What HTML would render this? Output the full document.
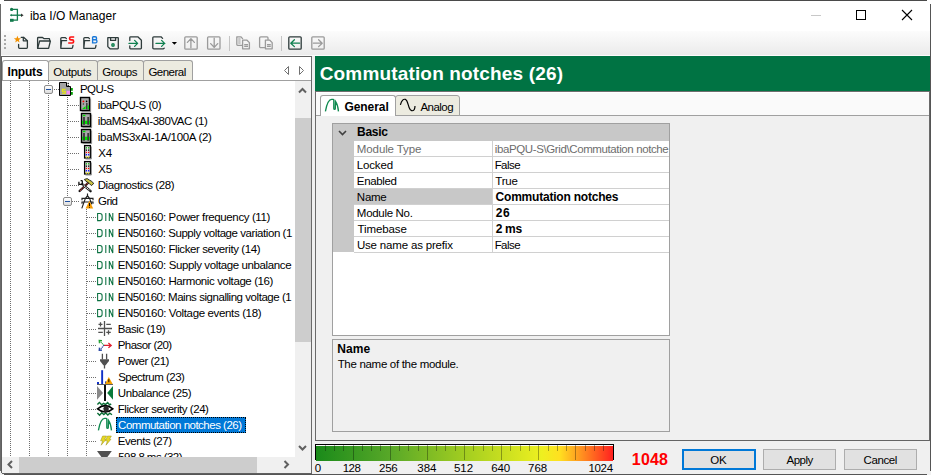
<!DOCTYPE html>
<html><head><meta charset="utf-8">
<style>
*{margin:0;padding:0;box-sizing:border-box}
html,body{width:931px;height:475px;overflow:hidden;background:#f0f0f0}
body{position:relative;font-family:"Liberation Sans",sans-serif;font-size:11px;color:#000}
.a{position:absolute}
.t{position:absolute;white-space:pre}
svg{position:absolute;overflow:visible}
</style></head><body>
<div class="a" style="left:0;top:0;width:931px;height:31px;background:#fff"></div>
<div class="a" style="left:1px;top:31px;width:929px;height:25px;background:linear-gradient(#fcfcfc,#ebebeb 96%,#fbfbfb 96%)"></div>
<div class="t" style="left:29.91px;top:10.44px;font-size:12px;line-height:12px;letter-spacing:0.013px">iba I/O Manager</div>
<div class="a" style="left:1px;top:56px;width:311px;height:417px;background:#fff;border-top:1px solid #646464;border-right:1px solid #6a6a6a"></div>
<div class="a" style="left:2px;top:60px;width:47px;height:21px;background:#fff;border:1px solid #a0a0a0;border-bottom:none;border-radius:3px 3px 0 0"></div>
<div class="a" style="left:48px;top:60px;width:50px;height:21px;background:#ecebe0;border:1px solid #a0a0a0;border-bottom:none;border-radius:3px 3px 0 0"></div>
<div class="a" style="left:97px;top:60px;width:47px;height:21px;background:#ecebe0;border:1px solid #a0a0a0;border-bottom:none;border-radius:3px 3px 0 0"></div>
<div class="a" style="left:143px;top:60px;width:50px;height:21px;background:#ecebe0;border:1px solid #a0a0a0;border-bottom:none;border-radius:3px 3px 0 0"></div>
<div class="t" style="left:7.51px;top:66.14px;font-size:12.0px;line-height:12.0px;letter-spacing:-0.176px;font-weight:bold">Inputs</div>
<div class="t" style="left:53.26px;top:67.07px;font-size:11.5px;line-height:11.5px;letter-spacing:-0.352px">Outputs</div>
<div class="t" style="left:102.22px;top:67.07px;font-size:11.5px;line-height:11.5px;letter-spacing:-0.501px">Groups</div>
<div class="t" style="left:148.43px;top:67.07px;font-size:11.5px;line-height:11.5px;letter-spacing:-0.515px">General</div>
<div class="a" style="left:1px;top:80px;width:310px;height:1px;background:#a0a0a0"></div>
<svg style="left:0;top:0" width="931" height="475"><path d="M288.5 66.5 L284.5 70.5 L288.5 74.5 Z M299.5 66.5 L303.5 70.5 L299.5 74.5 Z" fill="none" stroke="#707070" stroke-width="1"/></svg>
<div class="a" style="left:10px;top:81px;width:1px;height:376px;background:repeating-linear-gradient(#6e6e6e 0 1px,transparent 1px 2px)"></div>
<div class="a" style="left:29px;top:81px;width:1px;height:376px;background:repeating-linear-gradient(#6e6e6e 0 1px,transparent 1px 2px)"></div>
<div class="a" style="left:48px;top:81px;width:1px;height:4px;background:repeating-linear-gradient(#6e6e6e 0 1px,transparent 1px 2px)"></div>
<div class="a" style="left:48px;top:95px;width:1px;height:362px;background:repeating-linear-gradient(#6e6e6e 0 1px,transparent 1px 2px)"></div>
<div class="a" style="left:67px;top:97px;width:1px;height:360px;background:repeating-linear-gradient(#6e6e6e 0 1px,transparent 1px 2px)"></div>
<div class="a" style="left:86px;top:209px;width:1px;height:248px;background:repeating-linear-gradient(#6e6e6e 0 1px,transparent 1px 2px)"></div>
<div class="a" style="left:0;top:81px;width:294px;height:376px;overflow:hidden"><div class="a" style="left:0;top:-81px;width:931px;height:475px">
<div class="a" style="left:54px;top:89px;width:5px;height:1px;background:repeating-linear-gradient(90deg,#6e6e6e 0 1px,transparent 1px 2px)"></div>
<div class="t" style="left:80.06px;top:83.97px;font-size:11.5px;line-height:11.5px;letter-spacing:-0.603px">PQU-S</div>
<div class="a" style="left:68px;top:105px;width:11px;height:1px;background:repeating-linear-gradient(90deg,#6e6e6e 0 1px,transparent 1px 2px)"></div>
<div class="t" style="left:97.84px;top:99.97px;font-size:11.5px;line-height:11.5px;letter-spacing:-0.476px">ibaPQU-S (0)</div>
<div class="a" style="left:68px;top:121px;width:11px;height:1px;background:repeating-linear-gradient(90deg,#6e6e6e 0 1px,transparent 1px 2px)"></div>
<div class="t" style="left:97.84px;top:115.97px;font-size:11.5px;line-height:11.5px;letter-spacing:-0.458px">ibaMS4xAI-380VAC (1)</div>
<div class="a" style="left:68px;top:137px;width:11px;height:1px;background:repeating-linear-gradient(90deg,#6e6e6e 0 1px,transparent 1px 2px)"></div>
<div class="t" style="left:97.84px;top:131.97px;font-size:11.5px;line-height:11.5px;letter-spacing:-0.303px">ibaMS3xAI-1A/100A (2)</div>
<div class="a" style="left:68px;top:153px;width:11px;height:1px;background:repeating-linear-gradient(90deg,#6e6e6e 0 1px,transparent 1px 2px)"></div>
<div class="t" style="left:98.35px;top:147.97px;font-size:11.5px;line-height:11.5px;letter-spacing:-0.281px">X4</div>
<div class="a" style="left:68px;top:169px;width:11px;height:1px;background:repeating-linear-gradient(90deg,#6e6e6e 0 1px,transparent 1px 2px)"></div>
<div class="t" style="left:98.35px;top:163.97px;font-size:11.5px;line-height:11.5px;letter-spacing:-0.281px">X5</div>
<div class="a" style="left:68px;top:185px;width:11px;height:1px;background:repeating-linear-gradient(90deg,#6e6e6e 0 1px,transparent 1px 2px)"></div>
<div class="t" style="left:97.66px;top:179.97px;font-size:11.5px;line-height:11.5px;letter-spacing:-0.418px">Diagnostics (28)</div>
<div class="a" style="left:68px;top:201px;width:11px;height:1px;background:repeating-linear-gradient(90deg,#6e6e6e 0 1px,transparent 1px 2px)"></div>
<div class="t" style="left:98.02px;top:195.97px;font-size:11.5px;line-height:11.5px;letter-spacing:-0.580px">Grid</div>
<div class="a" style="left:87px;top:217px;width:10px;height:1px;background:repeating-linear-gradient(90deg,#6e6e6e 0 1px,transparent 1px 2px)"></div>
<div class="t" style="left:117.76px;top:211.97px;font-size:11.5px;line-height:11.5px;letter-spacing:-0.387px">EN50160: Power frequency (11)</div>
<div class="a" style="left:87px;top:233px;width:10px;height:1px;background:repeating-linear-gradient(90deg,#6e6e6e 0 1px,transparent 1px 2px)"></div>
<div class="t" style="left:117.76px;top:227.97px;font-size:11.5px;line-height:11.5px;letter-spacing:-0.435px">EN50160: Supply voltage variation (1</div>
<div class="a" style="left:87px;top:249px;width:10px;height:1px;background:repeating-linear-gradient(90deg,#6e6e6e 0 1px,transparent 1px 2px)"></div>
<div class="t" style="left:117.76px;top:243.97px;font-size:11.5px;line-height:11.5px;letter-spacing:-0.409px">EN50160: Flicker severity (14)</div>
<div class="a" style="left:87px;top:265px;width:10px;height:1px;background:repeating-linear-gradient(90deg,#6e6e6e 0 1px,transparent 1px 2px)"></div>
<div class="t" style="left:117.76px;top:259.97px;font-size:11.5px;line-height:11.5px;letter-spacing:-0.383px">EN50160: Supply voltage unbalance</div>
<div class="a" style="left:87px;top:281px;width:10px;height:1px;background:repeating-linear-gradient(90deg,#6e6e6e 0 1px,transparent 1px 2px)"></div>
<div class="t" style="left:117.76px;top:275.97px;font-size:11.5px;line-height:11.5px;letter-spacing:-0.409px">EN50160: Harmonic voltage (16)</div>
<div class="a" style="left:87px;top:297px;width:10px;height:1px;background:repeating-linear-gradient(90deg,#6e6e6e 0 1px,transparent 1px 2px)"></div>
<div class="t" style="left:117.76px;top:291.97px;font-size:11.5px;line-height:11.5px;letter-spacing:-0.454px">EN50160: Mains signalling voltage (1</div>
<div class="a" style="left:87px;top:313px;width:10px;height:1px;background:repeating-linear-gradient(90deg,#6e6e6e 0 1px,transparent 1px 2px)"></div>
<div class="t" style="left:117.76px;top:307.97px;font-size:11.5px;line-height:11.5px;letter-spacing:-0.358px">EN50160: Voltage events (18)</div>
<div class="a" style="left:87px;top:329px;width:10px;height:1px;background:repeating-linear-gradient(90deg,#6e6e6e 0 1px,transparent 1px 2px)"></div>
<div class="t" style="left:117.76px;top:323.97px;font-size:11.5px;line-height:11.5px;letter-spacing:-0.436px">Basic (19)</div>
<div class="a" style="left:87px;top:345px;width:10px;height:1px;background:repeating-linear-gradient(90deg,#6e6e6e 0 1px,transparent 1px 2px)"></div>
<div class="t" style="left:117.76px;top:339.97px;font-size:11.5px;line-height:11.5px;letter-spacing:-0.571px">Phasor (20)</div>
<div class="a" style="left:87px;top:361px;width:10px;height:1px;background:repeating-linear-gradient(90deg,#6e6e6e 0 1px,transparent 1px 2px)"></div>
<div class="t" style="left:117.76px;top:355.97px;font-size:11.5px;line-height:11.5px;letter-spacing:-0.514px">Power (21)</div>
<div class="a" style="left:87px;top:377px;width:10px;height:1px;background:repeating-linear-gradient(90deg,#6e6e6e 0 1px,transparent 1px 2px)"></div>
<div class="t" style="left:118.18px;top:371.97px;font-size:11.5px;line-height:11.5px;letter-spacing:-0.512px">Spectrum (23)</div>
<div class="a" style="left:87px;top:393px;width:10px;height:1px;background:repeating-linear-gradient(90deg,#6e6e6e 0 1px,transparent 1px 2px)"></div>
<div class="t" style="left:117.81px;top:387.97px;font-size:11.5px;line-height:11.5px;letter-spacing:-0.366px">Unbalance (25)</div>
<div class="a" style="left:87px;top:409px;width:10px;height:1px;background:repeating-linear-gradient(90deg,#6e6e6e 0 1px,transparent 1px 2px)"></div>
<div class="t" style="left:117.76px;top:403.97px;font-size:11.5px;line-height:11.5px;letter-spacing:-0.458px">Flicker severity (24)</div>
<div class="a" style="left:87px;top:425px;width:10px;height:1px;background:repeating-linear-gradient(90deg,#6e6e6e 0 1px,transparent 1px 2px)"></div>
<div class="a" style="left:116px;top:417px;width:130px;height:16px;background:#0078d7;outline:1px dotted #000;outline-offset:-1px"></div>
<div class="t" style="left:118.12px;top:419.97px;font-size:11.5px;line-height:11.5px;letter-spacing:-0.504px;color:#fff">Commutation notches (26)</div>
<div class="a" style="left:87px;top:441px;width:10px;height:1px;background:repeating-linear-gradient(90deg,#6e6e6e 0 1px,transparent 1px 2px)"></div>
<div class="t" style="left:117.76px;top:435.97px;font-size:11.5px;line-height:11.5px;letter-spacing:-0.445px">Events (27)</div>
<div class="a" style="left:87px;top:457px;width:10px;height:1px;background:repeating-linear-gradient(90deg,#6e6e6e 0 1px,transparent 1px 2px)"></div>
<div class="t" style="left:118.24px;top:451.97px;font-size:11.5px;line-height:11.5px;letter-spacing:-0.557px">598.8 ms (32)</div>
<svg style="left:0;top:0" width="931" height="475"><path d="M59.5 82.5 H66.5 V86.5 H70.5 V95.5 H59.5 Z" fill="#a4a4a4" stroke="#000" stroke-width="1"/><rect x="67.6" y="82.8" width="1.2" height="1.2" fill="#000"/><rect x="67.6" y="84.8" width="1.2" height="1.2" fill="#000"/><path d="M65.6 89.3 H62.4 V91.2 H65.2 V93.3 H62" fill="none" stroke="#f0f000" stroke-width="1.1"/><rect x="66.6" y="90.8" width="3.4" height="3.4" fill="#f48cf4"/><rect x="71" y="88" width="1.8" height="2.8" fill="#00a000"/><rect x="71" y="92" width="1.8" height="2.8" fill="#00a000"/><rect x="80.5" y="97.5" width="9" height="13" fill="#a8a8a8" stroke="#000" stroke-width="1.4"/><path d="M90.6 98.5 V111.6 H81.5" stroke="#808080" stroke-width="1" fill="none"/><circle cx="83.4" cy="101.4" r="0.9" fill="#ff0000"/><circle cx="86.6" cy="101.4" r="0.8" fill="#000"/><circle cx="83.4" cy="104" r="0.7" fill="#333"/><rect x="86" y="103" width="1.6" height="6.5" fill="#404040"/><path d="M82 109 L85.6 106 V109 Z" fill="#00e000"/><rect x="87.6" y="105.5" width="1.4" height="3.5" fill="#00e000"/><rect x="81.5" y="113.5" width="9" height="13" fill="#a8a8a8" stroke="#000" stroke-width="1.4"/><path d="M91.6 114.5 V127.6 H82.5" stroke="#808080" stroke-width="1" fill="none"/><rect x="82.8" y="114.8" width="2.6" height="1.4" fill="#00e000"/><rect x="82" y="120.7" width="8" height="3.4" fill="#00e000"/><rect x="83.1" y="117" width="1.8" height="7.8" fill="#3a3a3a"/><rect x="87.3" y="117" width="1.8" height="7.8" fill="#3a3a3a"/><rect x="81.5" y="129.5" width="9" height="13" fill="#a8a8a8" stroke="#000" stroke-width="1.4"/><path d="M91.6 130.5 V143.6 H82.5" stroke="#808080" stroke-width="1" fill="none"/><rect x="82.8" y="130.8" width="2.6" height="1.4" fill="#00e000"/><rect x="82" y="136.7" width="8" height="3.4" fill="#00e000"/><rect x="83.1" y="133" width="1.8" height="7.8" fill="#3a3a3a"/><rect x="87.3" y="133" width="1.8" height="7.8" fill="#3a3a3a"/><rect x="84.6" y="145.6" width="5.8" height="12.4" fill="#e0e0e0" stroke="#000" stroke-width="1.3"/><path d="M91.4 146.5 V159 H85.5" stroke="#909090" stroke-width="1" fill="none"/><rect x="85.8" y="147.2" width="1.2" height="1.3" fill="#00b000"/><rect x="88" y="147.2" width="1.2" height="1.3" fill="#00b000"/><rect x="85.8" y="149.5" width="1.2" height="1.3" fill="#000"/><rect x="88" y="149.5" width="1.2" height="1.3" fill="#000"/><rect x="85.8" y="151.79999999999998" width="1.2" height="1.3" fill="#ff0000"/><rect x="88" y="151.79999999999998" width="1.2" height="1.3" fill="#ff0000"/><rect x="85.8" y="154.1" width="1.2" height="1.3" fill="#0000ff"/><rect x="88" y="154.1" width="1.2" height="1.3" fill="#0000ff"/><rect x="85.8" y="156.39999999999998" width="1.2" height="1.3" fill="#f0f000"/><rect x="88" y="156.39999999999998" width="1.2" height="1.3" fill="#f0f000"/><rect x="84.6" y="161.6" width="5.8" height="12.4" fill="#e0e0e0" stroke="#000" stroke-width="1.3"/><path d="M91.4 162.5 V175 H85.5" stroke="#909090" stroke-width="1" fill="none"/><rect x="85.8" y="163.2" width="1.2" height="1.3" fill="#00b000"/><rect x="88" y="163.2" width="1.2" height="1.3" fill="#00b000"/><rect x="85.8" y="165.5" width="1.2" height="1.3" fill="#000"/><rect x="88" y="165.5" width="1.2" height="1.3" fill="#000"/><rect x="85.8" y="167.79999999999998" width="1.2" height="1.3" fill="#ff0000"/><rect x="88" y="167.79999999999998" width="1.2" height="1.3" fill="#ff0000"/><rect x="85.8" y="170.1" width="1.2" height="1.3" fill="#0000ff"/><rect x="88" y="170.1" width="1.2" height="1.3" fill="#0000ff"/><rect x="85.8" y="172.39999999999998" width="1.2" height="1.3" fill="#f0f000"/><rect x="88" y="172.39999999999998" width="1.2" height="1.3" fill="#f0f000"/><path d="M88 183 L79.6 191" stroke="#111" stroke-width="2.3" stroke-linecap="round"/><path d="M87.6 183.4 L80 190.6" stroke="#e04848" stroke-width="1.2" stroke-dasharray="1.1 0.8"/><path d="M82.2 184.2 L90.6 191.2" stroke="#111" stroke-width="2.3" stroke-linecap="round"/><path d="M82.6 184.6 L90.2 190.8" stroke="#fff" stroke-width="1.2" stroke-dasharray="1.1 0.8"/><path d="M78.9 181.8 V184.3 H82.3 V180.6 M80.6 180.6 H82.3" fill="none" stroke="#111" stroke-width="1.3"/><path d="M84.4 179.4 L87.2 178.6 L89.6 180.2 L91.2 181 L93.8 183.4 L91.4 185.6 L89.6 183.8 L87.6 182.2 L85.8 181.2 Z" fill="#c8c040" stroke="#1a1a1a" stroke-width="0.9" stroke-linejoin="round"/><g stroke="#202020" stroke-width="1.15" fill="none" stroke-linejoin="miter"><path d="M87.5 193.4 V196.2 M85.4 198.4 L87.5 195.6 L89.6 198.4 M82 200.2 V198.4 H93 V200.2 M82 203.8 V202 H93 V203.8 M85.4 198.4 L81.8 208.4 M89.6 198.4 L91.8 204.4"/></g><path d="M89.4 200.8 L93.2 208.4 H85.6 Z" fill="#f59a00"/><rect x="89" y="203" width="0.9" height="3" fill="#000"/><rect x="89" y="206.8" width="0.9" height="0.9" fill="#000"/><g stroke="#0a7040" stroke-width="1.05" fill="none" stroke-linejoin="miter"><path d="M97.6 213.5 H100 Q102.1 213.5 102.1 215.8 V218.3 Q102.1 220.6 100 220.6 H97.6 Z"/><path d="M105.8 213 V221.1"/><path d="M109.3 221.1 V213.1 L112.8 221 V213"/></g><g stroke="#0a7040" stroke-width="1.05" fill="none" stroke-linejoin="miter"><path d="M97.6 229.5 H100 Q102.1 229.5 102.1 231.8 V234.3 Q102.1 236.6 100 236.6 H97.6 Z"/><path d="M105.8 229 V237.1"/><path d="M109.3 237.1 V229.1 L112.8 237 V229"/></g><g stroke="#0a7040" stroke-width="1.05" fill="none" stroke-linejoin="miter"><path d="M97.6 245.5 H100 Q102.1 245.5 102.1 247.8 V250.3 Q102.1 252.6 100 252.6 H97.6 Z"/><path d="M105.8 245 V253.1"/><path d="M109.3 253.1 V245.1 L112.8 253 V245"/></g><g stroke="#0a7040" stroke-width="1.05" fill="none" stroke-linejoin="miter"><path d="M97.6 261.5 H100 Q102.1 261.5 102.1 263.8 V266.3 Q102.1 268.6 100 268.6 H97.6 Z"/><path d="M105.8 261 V269.1"/><path d="M109.3 269.1 V261.1 L112.8 269 V261"/></g><g stroke="#0a7040" stroke-width="1.05" fill="none" stroke-linejoin="miter"><path d="M97.6 277.5 H100 Q102.1 277.5 102.1 279.8 V282.3 Q102.1 284.6 100 284.6 H97.6 Z"/><path d="M105.8 277 V285.1"/><path d="M109.3 285.1 V277.1 L112.8 285 V277"/></g><g stroke="#0a7040" stroke-width="1.05" fill="none" stroke-linejoin="miter"><path d="M97.6 293.5 H100 Q102.1 293.5 102.1 295.8 V298.3 Q102.1 300.6 100 300.6 H97.6 Z"/><path d="M105.8 293 V301.1"/><path d="M109.3 301.1 V293.1 L112.8 301 V293"/></g><g stroke="#0a7040" stroke-width="1.05" fill="none" stroke-linejoin="miter"><path d="M97.6 309.5 H100 Q102.1 309.5 102.1 311.8 V314.3 Q102.1 316.6 100 316.6 H97.6 Z"/><path d="M105.8 309 V317.1"/><path d="M109.3 317.1 V309.1 L112.8 317 V309"/></g><g stroke="#505050" stroke-width="1.3"><path d="M104.5 321 V336 M98 328.5 H112 M98.5 324.4 H102.5 M100.5 322.3 V326.5 M106.3 324.4 H110.8 M98.3 332.3 H102.8 M106.3 332.3 H110.8 M108.5 330.2 V334.4"/></g><path d="M104 345.4 H111 M108.4 343 L111.2 345.4 L108.4 347.8" stroke="#e02030" stroke-width="1.3" fill="none"/><path d="M104 345.4 L99.6 340.8" stroke="#20a030" stroke-width="1.1" stroke-dasharray="1.1 0.7"/><path d="M99.4 343.2 L99.2 340.4 L102 340.6" stroke="#20a030" stroke-width="1.2" fill="none"/><path d="M104 345.4 L99.6 350" stroke="#2040a0" stroke-width="1.1" stroke-dasharray="1.1 0.7"/><path d="M99.4 347.6 L99.2 350.4 L102 350.2" stroke="#2040a0" stroke-width="1.2" fill="none"/><path d="M102.4 353.8 V359.6 M106.6 353.8 V359.6 M104.5 364 V368.5" stroke="#505050" stroke-width="1.3"/><path d="M100 359.2 H109 V361 L105.6 365.2 H103.4 L100 361 Z" fill="#505050"/><rect x="97" y="382" width="2" height="2.4" fill="#1030c8"/><rect x="101.2" y="370.2" width="1.9" height="14.2" fill="#1030c8"/><rect x="105" y="381.4" width="1.2" height="3" fill="#1030c8"/><path d="M108.8 377 L112.8 384.2 H104.8 Z" fill="#f5a000"/><rect x="108.4" y="379.2" width="0.9" height="3" fill="#000"/><rect x="97" y="384" width="16" height="0.9" fill="#505050"/><path d="M97 386 L103 392.9 L97 399.8 Z" fill="#8a8a8a"/><rect x="104" y="385" width="2" height="16" fill="#111"/><path d="M113 386 L107.2 392.9 L113 399.8 Z" fill="#0a7a3a"/><path d="M97.4 404.4 L99.4 402.4 L101.6 404.8 L103.6 403.4 L105.6 404.6 L107.6 402.6 L109.6 404.8 L111.2 404 " fill="none" stroke="#0a6e36" stroke-width="1.4"/><path d="M97.4 413 L99.6 415.2 L101.8 412.8 L103.8 414.6 L105.8 413 L107.8 415 L109.8 413.2 L112 414.8" fill="none" stroke="#0a6e36" stroke-width="1.4"/><path d="M97.6 408.8 Q105.2 402.4 112.8 408.8 Q105.2 415.2 97.6 408.8 Z" fill="#fff" stroke="#000" stroke-width="1.6"/><circle cx="105.8" cy="408.8" r="3" fill="#2a2a2a"/><path d="M103.4 407 Q102.2 408.8 103.4 410.6" stroke="#fff" stroke-width="1" fill="none"/><path d="M98.4 430.4 C99.6 424 101.8 418.4 104.6 418.4 H106 Q106.8 418.4 106.8 419.2 V427.4 Q106.8 428.3 107.5 428.3 Q108.3 428.3 108.3 427.4 L108.5 420.4 C110 422.6 111.2 427 111.5 430.4" fill="none" stroke="#108a50" stroke-width="1.35"/><path d="M102.6 436 H106.6 L104.6 439.2 H106.2 L101.2 445.2 L102.6 440.8 H100.6 Z" fill="#e8d820" stroke="#9a9020" stroke-width="0.5"/><path d="M107.4 436 H111.4 L109.4 439.2 H111 L106 445.2 L107.4 440.8 H105.4 Z" fill="#e8d820" stroke="#9a9020" stroke-width="0.5"/><path d="M97 451 H111.8 L107.4 457 H101.4 Z" fill="#505050"/></svg>
</div></div>
<div class="a" style="left:44px;top:85px;width:9px;height:9px;border:1px solid #8c8c8c;border-radius:2px;background:linear-gradient(#fff,#dcdcdc)"></div>
<div class="a" style="left:46px;top:89px;width:5px;height:1px;background:#2050a0"></div>
<div class="a" style="left:63px;top:197px;width:9px;height:9px;border:1px solid #8c8c8c;border-radius:2px;background:linear-gradient(#fff,#dcdcdc)"></div>
<div class="a" style="left:65px;top:201px;width:5px;height:1px;background:#2050a0"></div>
<div class="a" style="left:295px;top:81px;width:16px;height:376px;background:#f0f0f0"></div>
<div class="a" style="left:295px;top:118px;width:16px;height:224px;background:#cdcdcd"></div>
<div class="a" style="left:2px;top:457px;width:309px;height:16px;background:#f0f0f0"></div>
<div class="a" style="left:19px;top:457px;width:238px;height:16px;background:#cdcdcd"></div>
<svg style="left:0;top:0" width="931" height="475"><g fill="none" stroke="#606060" stroke-width="2"><path d="M299 92.5 L302.5 89 L306 92.5"/><path d="M299 446 L302.5 449.5 L306 446"/><path d="M12 461 L8.5 464.5 L12 468"/><path d="M284.5 461 L288 464.5 L284.5 468"/></g></svg>
<div class="a" style="left:315px;top:56px;width:615px;height:35px;background:#007343"></div>
<div class="t" style="left:319.72px;top:64.02px;font-size:19px;line-height:19px;letter-spacing:0.159px;font-weight:bold;color:#fff">Commutation notches (26)</div>
<div class="a" style="left:315px;top:91px;width:615px;height:350px;background:#f0f0f0;border-left:1px solid #6a6a6a;border-bottom:1px solid #646464"></div>
<div class="a" style="left:316px;top:91px;width:614px;height:24px;background:#fafafa;border-top:1px solid #6e6e6e;box-shadow:inset 0 1px 0 #fff"></div>
<div class="a" style="left:316px;top:115px;width:614px;height:1px;background:#a0a0a0"></div>
<div class="a" style="left:395px;top:95px;width:65px;height:21px;background:#ecebe0;border:1px solid #a0a0a0;border-radius:3px 3px 0 0"></div>
<div class="a" style="left:320px;top:95px;width:76px;height:21px;background:#fff;border:1px solid #a0a0a0;border-bottom:none;border-radius:3px 3px 0 0"></div>
<div class="t" style="left:344.41px;top:101.14px;font-size:12.0px;line-height:12.0px;letter-spacing:-0.064px;font-weight:bold">General</div>
<div class="t" style="left:420.48px;top:102.07px;font-size:11.5px;line-height:11.5px;letter-spacing:-0.534px">Analog</div>
<div class="a" style="left:332px;top:123px;width:338px;height:213px;background:#fff;border:1px solid #a0a0a0"></div>
<div class="a" style="left:333px;top:124px;width:336px;height:17px;background:#c8c8c8"></div>
<div class="a" style="left:333px;top:141px;width:21px;height:111px;background:#c8c8c8"></div>
<svg style="left:0;top:0" width="931" height="475"><path d="M339 131 L342.5 134.5 L346 131" fill="none" stroke="#404040" stroke-width="1.6"/></svg>
<div class="t" style="left:357.01px;top:126.34px;font-size:12.0px;line-height:12.0px;letter-spacing:-0.276px;font-weight:bold">Basic</div>
<div class="a" style="left:354px;top:156px;width:315px;height:1px;background:#d0d0d0"></div>
<div class="t" style="left:356.86px;top:144.07px;font-size:11.5px;line-height:11.5px;letter-spacing:-0.112px;color:#6d6d6d">Module Type</div>
<div class="a" style="left:493px;top:141px;width:176px;height:15px;overflow:hidden"><div class="a" style="left:-493px;top:-141px;width:931px;height:475px">
<div class="t" style="left:494.84px;top:144.07px;font-size:11.5px;line-height:11.5px;letter-spacing:-0.390px;color:#6d6d6d">ibaPQU-S\Grid\Commutation notche</div>
</div></div>
<div class="a" style="left:354px;top:172px;width:315px;height:1px;background:#d0d0d0"></div>
<div class="t" style="left:356.86px;top:160.07px;font-size:11.5px;line-height:11.5px;letter-spacing:-0.180px">Locked</div>
<div class="a" style="left:493px;top:157px;width:176px;height:15px;overflow:hidden"><div class="a" style="left:-493px;top:-157px;width:931px;height:475px">
<div class="t" style="left:494.66px;top:160.07px;font-size:11.5px;line-height:11.5px;letter-spacing:-0.563px">False</div>
</div></div>
<div class="a" style="left:354px;top:188px;width:315px;height:1px;background:#d0d0d0"></div>
<div class="t" style="left:356.86px;top:176.07px;font-size:11.5px;line-height:11.5px;letter-spacing:-0.343px">Enabled</div>
<div class="a" style="left:493px;top:173px;width:176px;height:15px;overflow:hidden"><div class="a" style="left:-493px;top:-173px;width:931px;height:475px">
<div class="t" style="left:495.35px;top:176.07px;font-size:11.5px;line-height:11.5px;letter-spacing:-0.229px">True</div>
</div></div>
<div class="a" style="left:354px;top:189px;width:138px;height:15px;background:#c8c8c8"></div>
<div class="a" style="left:354px;top:204px;width:315px;height:1px;background:#d0d0d0"></div>
<div class="t" style="left:356.86px;top:192.07px;font-size:11.5px;line-height:11.5px;letter-spacing:-0.268px">Name</div>
<div class="a" style="left:493px;top:189px;width:176px;height:15px;overflow:hidden"><div class="a" style="left:-493px;top:-189px;width:931px;height:475px">
<div class="t" style="left:495.61px;top:191.14px;font-size:12.0px;line-height:12.0px;letter-spacing:-0.217px;font-weight:bold">Commutation notches</div>
</div></div>
<div class="a" style="left:354px;top:220px;width:315px;height:1px;background:#d0d0d0"></div>
<div class="t" style="left:356.86px;top:208.07px;font-size:11.5px;line-height:11.5px;letter-spacing:-0.310px">Module No.</div>
<div class="a" style="left:493px;top:205px;width:176px;height:15px;overflow:hidden"><div class="a" style="left:-493px;top:-205px;width:931px;height:475px">
<div class="t" style="left:495.69px;top:207.14px;font-size:12.0px;line-height:12.0px;letter-spacing:0.646px;font-weight:bold">26</div>
</div></div>
<div class="a" style="left:354px;top:236px;width:315px;height:1px;background:#d0d0d0"></div>
<div class="t" style="left:357.55px;top:224.07px;font-size:11.5px;line-height:11.5px;letter-spacing:-0.120px">Timebase</div>
<div class="a" style="left:493px;top:221px;width:176px;height:15px;overflow:hidden"><div class="a" style="left:-493px;top:-221px;width:931px;height:475px">
<div class="t" style="left:495.69px;top:223.14px;font-size:12.0px;line-height:12.0px;letter-spacing:-0.328px;font-weight:bold">2 ms</div>
</div></div>
<div class="a" style="left:354px;top:252px;width:315px;height:1px;background:#d0d0d0"></div>
<div class="t" style="left:356.91px;top:240.07px;font-size:11.5px;line-height:11.5px;letter-spacing:-0.176px">Use name as prefix</div>
<div class="a" style="left:493px;top:237px;width:176px;height:15px;overflow:hidden"><div class="a" style="left:-493px;top:-237px;width:931px;height:475px">
<div class="t" style="left:494.66px;top:240.07px;font-size:11.5px;line-height:11.5px;letter-spacing:-0.563px">False</div>
</div></div>
<div class="a" style="left:492px;top:141px;width:1px;height:111px;background:#d0d0d0"></div>
<div class="a" style="left:332px;top:339px;width:338px;height:93px;background:#f0f0f0;border:1px solid #a0a0a0"></div>
<div class="t" style="left:337.21px;top:343.24px;font-size:12.0px;line-height:12.0px;letter-spacing:0.114px;font-weight:bold">Name</div>
<div class="t" style="left:337.65px;top:358.97px;font-size:11.5px;line-height:11.5px;letter-spacing:-0.306px">The name of the module.</div>
<div class="a" style="left:315px;top:444px;width:299px;height:16px;background:#000"></div>
<div class="a" style="left:316px;top:445px;width:297px;height:16px;background:linear-gradient(90deg,#1a8a1a 0%,#58a828 25%,#a8d020 52%,#eef020 76%,#ffe020 82%,#ffa020 88%,#ff6020 94%,#ff2020 100%)"></div>
<div class="a" style="left:316px;top:445px;width:297px;height:1px;background:#fafafa"></div>
<div class="a" style="left:324.78px;top:445px;width:1px;height:6px;background:rgba(0,0,0,0.32)"></div><div class="a" style="left:334.06px;top:445px;width:1px;height:6px;background:rgba(0,0,0,0.32)"></div><div class="a" style="left:343.34px;top:445px;width:1px;height:6px;background:rgba(0,0,0,0.32)"></div><div class="a" style="left:352.62px;top:445px;width:1px;height:15px;background:rgba(0,0,0,0.32)"></div><div class="a" style="left:361.90px;top:445px;width:1px;height:6px;background:rgba(0,0,0,0.32)"></div><div class="a" style="left:371.18px;top:445px;width:1px;height:6px;background:rgba(0,0,0,0.32)"></div><div class="a" style="left:380.46px;top:445px;width:1px;height:6px;background:rgba(0,0,0,0.32)"></div><div class="a" style="left:389.74px;top:445px;width:1px;height:15px;background:rgba(0,0,0,0.32)"></div><div class="a" style="left:399.02px;top:445px;width:1px;height:6px;background:rgba(0,0,0,0.32)"></div><div class="a" style="left:408.30px;top:445px;width:1px;height:6px;background:rgba(0,0,0,0.32)"></div><div class="a" style="left:417.58px;top:445px;width:1px;height:6px;background:rgba(0,0,0,0.32)"></div><div class="a" style="left:426.86px;top:445px;width:1px;height:15px;background:rgba(0,0,0,0.32)"></div><div class="a" style="left:436.14px;top:445px;width:1px;height:6px;background:rgba(0,0,0,0.32)"></div><div class="a" style="left:445.42px;top:445px;width:1px;height:6px;background:rgba(0,0,0,0.32)"></div><div class="a" style="left:454.70px;top:445px;width:1px;height:6px;background:rgba(0,0,0,0.32)"></div><div class="a" style="left:463.98px;top:445px;width:1px;height:15px;background:rgba(0,0,0,0.32)"></div><div class="a" style="left:473.26px;top:445px;width:1px;height:6px;background:rgba(0,0,0,0.32)"></div><div class="a" style="left:482.54px;top:445px;width:1px;height:6px;background:rgba(0,0,0,0.32)"></div><div class="a" style="left:491.82px;top:445px;width:1px;height:6px;background:rgba(0,0,0,0.32)"></div><div class="a" style="left:501.10px;top:445px;width:1px;height:15px;background:rgba(0,0,0,0.32)"></div><div class="a" style="left:510.38px;top:445px;width:1px;height:6px;background:rgba(0,0,0,0.32)"></div><div class="a" style="left:519.66px;top:445px;width:1px;height:6px;background:rgba(0,0,0,0.32)"></div><div class="a" style="left:528.94px;top:445px;width:1px;height:6px;background:rgba(0,0,0,0.32)"></div><div class="a" style="left:538.22px;top:445px;width:1px;height:15px;background:rgba(0,0,0,0.32)"></div><div class="a" style="left:547.50px;top:445px;width:1px;height:6px;background:rgba(0,0,0,0.32)"></div><div class="a" style="left:556.78px;top:445px;width:1px;height:6px;background:rgba(0,0,0,0.32)"></div><div class="a" style="left:566.06px;top:445px;width:1px;height:6px;background:rgba(0,0,0,0.32)"></div><div class="a" style="left:575.34px;top:445px;width:1px;height:15px;background:rgba(0,0,0,0.32)"></div><div class="a" style="left:584.62px;top:445px;width:1px;height:6px;background:rgba(0,0,0,0.32)"></div><div class="a" style="left:593.90px;top:445px;width:1px;height:6px;background:rgba(0,0,0,0.32)"></div><div class="a" style="left:603.18px;top:445px;width:1px;height:6px;background:rgba(0,0,0,0.32)"></div>
<div class="t" style="left:314.75px;top:462.77px;font-size:11.5px;line-height:11.5px;letter-spacing:-0.291px">0</div>
<div class="t" style="left:342.73px;top:462.77px;font-size:11.5px;line-height:11.5px;letter-spacing:-0.561px">128</div>
<div class="t" style="left:379.03px;top:462.77px;font-size:11.5px;line-height:11.5px;letter-spacing:-0.227px">256</div>
<div class="t" style="left:417.36px;top:462.77px;font-size:11.5px;line-height:11.5px;letter-spacing:-0.127px">384</div>
<div class="t" style="left:453.94px;top:462.77px;font-size:11.5px;line-height:11.5px;letter-spacing:0.006px">512</div>
<div class="t" style="left:491.23px;top:462.77px;font-size:11.5px;line-height:11.5px;letter-spacing:-0.127px">640</div>
<div class="t" style="left:528.11px;top:462.77px;font-size:11.5px;line-height:11.5px;letter-spacing:-0.094px">768</div>
<div class="t" style="left:588.53px;top:462.77px;font-size:11.5px;line-height:11.5px;letter-spacing:-0.345px">1024</div>
<div class="t" style="left:631.81px;top:451.96px;font-size:16px;line-height:16px;letter-spacing:0.206px;font-weight:bold;color:#f00">1048</div>
<div class="a" style="left:682px;top:449px;width:74px;height:21px;background:#e1e1e1;border:2px solid #0078d7"></div>
<div class="a" style="left:763px;top:449px;width:73px;height:21px;background:#e1e1e1;border:1px solid #adadad"></div>
<div class="a" style="left:844px;top:449px;width:73px;height:21px;background:#e1e1e1;border:1px solid #adadad"></div>
<div class="t" style="left:710.16px;top:454.97px;font-size:11.5px;line-height:11.5px;letter-spacing:-0.105px">OK</div>
<div class="t" style="left:786.58px;top:454.97px;font-size:11.5px;line-height:11.5px;letter-spacing:-0.532px">Apply</div>
<div class="t" style="left:863.52px;top:454.97px;font-size:11.5px;line-height:11.5px;letter-spacing:-0.382px">Cancel</div>
<svg style="left:0;top:0" width="931" height="475"><rect x="4" y="35" width="2" height="2" fill="#a8a8a8"/><rect x="4" y="39" width="2" height="2" fill="#a8a8a8"/><rect x="4" y="43" width="2" height="2" fill="#a8a8a8"/><rect x="4" y="47" width="2" height="2" fill="#a8a8a8"/><path d="M18.6 44.5 V47.3 Q18.6 48.3 19.6 48.3 H26.6 Q27.4 48.3 27.4 47.3 V40.8 L23.6 37.3 H21.2" stroke="#2e3b3b" stroke-width="1.3" fill="none" stroke-linejoin="round" stroke-linecap="round"/><path d="M23.3 37.5 V40.8 H27.2" stroke="#2e3b3b" stroke-width="1.3" fill="none" stroke-linejoin="round" stroke-linecap="round"/><path d="M17.40 35.80 L18.34 38.21 L20.92 38.36 L18.92 39.99 L19.57 42.49 L17.40 41.10 L15.23 42.49 L15.88 39.99 L13.88 38.36 L16.46 38.21 Z" fill="#f29100"/><path d="M37.6 48.3 V38.3 Q37.6 37.5 38.4 37.5 H42.5 L43.8 38.6 H49 Q49.6 38.6 49.6 39.3 V40.6" stroke="#2e3b3b" stroke-width="1.3" fill="none" stroke-linejoin="round" stroke-linecap="round"/><path d="M37.6 48.3 L39.6 41 H50.4 L48.6 48.3 Z" stroke="#2e3b3b" stroke-width="1.3" fill="none" stroke-linejoin="round" stroke-linecap="round"/><path d="M60.8 48.3 V38.6 Q60.8 37.6 61.8 37.6 H65.4 L66.4 38.6 M61.6 40.6 H66.6 M60.8 48.3 L61.6 40.6 M60.8 48.3 H71.6 Q72.6 48.3 72.6 47.3 L73 45.3" stroke="#2e3b3b" stroke-width="1.3" fill="none" stroke-linejoin="round" stroke-linecap="round"/><path d="M74.2 37 H70.8 Q69.6 37 69.6 38.4 Q69.6 39.9 71 39.9 H72.4 Q73.6 39.9 73.6 41.4 Q73.6 43 72.2 43 H68.2" fill="none" stroke="#ff1010" stroke-width="1.7"/><path d="M83.8 48.3 V38.6 Q83.8 37.6 84.8 37.6 H88.4 L89.4 38.6 M84.6 40.6 H89.6 M83.8 48.3 L84.6 40.6 M83.8 48.3 H94.6 Q95.6 48.3 95.6 47.3 L96 45.3" stroke="#2e3b3b" stroke-width="1.3" fill="none" stroke-linejoin="round" stroke-linecap="round"/><path d="M92.6 36.7 V42.9 H95.6 Q97 42.9 97 41.3 Q97 39.7 95.4 39.7 H92.6 M92.6 39.7 H95.2 Q96.6 39.7 96.6 38.2 Q96.6 36.7 95.2 36.7 H92.6" fill="none" stroke="#1a78d8" stroke-width="1.35"/><path d="M107.8 37.6 H117.8 Q118.3 37.6 118.3 38.1 V48.3 Q118.3 48.8 117.8 48.8 H110 L107.8 46.6 V38.1 Q107.8 37.6 108.3 37.6 Z" stroke="#2e3b3b" stroke-width="1.3" fill="none" stroke-linejoin="round" stroke-linecap="round"/><path d="M110.6 37.6 V40.4 H115.6 V37.6" stroke="#2e3b3b" stroke-width="1.3" fill="none" stroke-linejoin="round" stroke-linecap="round"/><circle cx="113" cy="45" r="1.9" fill="#108050"/><circle cx="113" cy="45" r="0.7" fill="#5aa882"/><path d="M129.8 40.6 V37.6 Q129.8 36.8 130.6 36.8 H137.8 L141.4 40.2 V48 Q141.4 48.8 140.6 48.8 H130.6 Q129.8 48.8 129.8 48 V46" stroke="#2e3b3b" stroke-width="1.3" fill="none" stroke-linejoin="round" stroke-linecap="round"/><path d="M129 43.4 H137.6 M134.6 40.4 L137.6 43.4 L134.6 46.4" stroke="#108050" stroke-width="1.3" fill="none" stroke-linejoin="round" stroke-linecap="round"/><path d="M162.6 38.4 L161 36.8 H153.8 Q152.8 36.8 152.8 37.8 V48 Q152.8 48.8 153.8 48.8 H163.4 L164.2 48.2" stroke="#2e3b3b" stroke-width="1.3" fill="none" stroke-linejoin="round" stroke-linecap="round"/><path d="M156 43.4 H164.8 M161.6 40.4 L164.6 43.4 L161.6 46.4" stroke="#108050" stroke-width="1.3" fill="none" stroke-linejoin="round" stroke-linecap="round"/><path d="M171.8 42 H177 L174.4 44.8 Z" fill="#000"/><rect x="184.8" y="36.8" width="12.4" height="12.4" rx="1" stroke="#9a9a9a" stroke-width="1.3" fill="none" stroke-linejoin="round" stroke-linecap="round"/><path d="M190.9 47.8 V38.6 M187.4 42.4 L190.9 38.6 L194.4 42.4" stroke="#9a9a9a" stroke-width="1.3" fill="none" stroke-linejoin="round" stroke-linecap="round"/><rect x="207.6" y="36.8" width="12.4" height="12.4" rx="1" stroke="#9a9a9a" stroke-width="1.3" fill="none" stroke-linejoin="round" stroke-linecap="round"/><path d="M214.2 38.2 V47.4 M210.7 43.6 L214.2 47.4 L217.7 43.6" stroke="#9a9a9a" stroke-width="1.3" fill="none" stroke-linejoin="round" stroke-linecap="round"/><rect x="229" y="36" width="1" height="15" fill="#c4c4c4"/><rect x="281" y="36" width="1" height="15" fill="#c4c4c4"/><path d="M236.8 36.8 H240.8 L242.6 38.6 M236.8 36.8 V44.6 Q236.8 45.4 237.6 45.4 H241.6" stroke="#9a9a9a" stroke-width="1.3" fill="none" stroke-linejoin="round" stroke-linecap="round"/><path d="M238.2 39 H240.6 M238.2 41 H240.6 M238.2 43 H240.6" stroke="#9a9a9a" stroke-width="1.2"/><path d="M242.6 40.2 H247 L249.4 42.6 V48.8 H242.6 Z" stroke="#9a9a9a" stroke-width="1.3" fill="none" stroke-linejoin="round" stroke-linecap="round"/><path d="M244.2 46.4 H248 M244.2 44.6 H248" stroke="#9a9a9a" stroke-width="1.2"/><path d="M264.6 47.6 H260.4 Q259.6 47.6 259.6 46.8 V38 Q259.6 36.8 260.8 36.8 H267 Q268 36.8 268 38 V39.6" stroke="#9a9a9a" stroke-width="1.3" fill="none" stroke-linejoin="round" stroke-linecap="round"/><path d="M265.4 40.2 H269.8 L272.2 42.6 V48.8 H265.4 Z" stroke="#9a9a9a" stroke-width="1.3" fill="none" stroke-linejoin="round" stroke-linecap="round"/><path d="M267 46.4 H270.8 M267 44.6 H270.8" stroke="#9a9a9a" stroke-width="1.2"/><rect x="288.8" y="36.8" width="12.4" height="12.4" rx="1" stroke="#2e3b3b" stroke-width="1.3" fill="none" stroke-linejoin="round" stroke-linecap="round"/><path d="M299.6 43.2 H290.8 M294.4 39.8 L290.8 43.2 L294.4 46.6" stroke="#108050" stroke-width="1.3" fill="none" stroke-linejoin="round" stroke-linecap="round"/><rect x="311.8" y="36.8" width="12.4" height="12.4" rx="1" stroke="#9a9a9a" stroke-width="1.3" fill="none" stroke-linejoin="round" stroke-linecap="round"/><path d="M313.4 43.2 H322.2 M318.6 39.8 L322.2 43.2 L318.6 46.6" stroke="#9a9a9a" stroke-width="1.3" fill="none" stroke-linejoin="round" stroke-linecap="round"/><g stroke="#127a4c" stroke-width="1.3" fill="none"><path d="M11.5 9.4 H17.4 V20.2 H12"/><path d="M10.6 15.2 H22"/></g><circle cx="11.6" cy="9.4" r="1.6" fill="#127a4c"/><rect x="10" y="18.8" width="3.6" height="3" fill="#127a4c"/><path d="M10 15.2 L11.6 13.8 V16.6 Z" fill="#127a4c"/><path d="M21 13.4 L23.6 15.2 L21 17 Z" fill="#333"/><path transform="translate(227,-319)" d="M98.4 430.4 C99.6 424 101.8 418.4 104.6 418.4 H106 Q106.8 418.4 106.8 419.2 V427.4 Q106.8 428.3 107.5 428.3 Q108.3 428.3 108.3 427.4 L108.5 420.4 C110 422.6 111.2 427 111.5 430.4" fill="none" stroke="#108a50" stroke-width="1.35"/><path d="M400.4 104.8 C401.6 100 403.6 98.8 405.4 99.4 C407.4 100.2 408 104.4 409.2 107.8 C410.4 111 412.6 111.6 414.2 109.6 C414.8 108.6 415 107.2 415 106" fill="none" stroke="#000" stroke-width="1.2"/></svg>
<div class="a" style="left:4px;top:0;width:923px;height:1px;background:#4a4a4a"></div>
<div class="a" style="left:0;top:4px;width:1px;height:467px;background:#6a6a6a"></div>
<div class="a" style="left:1px;top:56px;width:1px;height:417px;background:#5f5f5f"></div>
<div class="a" style="left:2px;top:473px;width:310px;height:1px;background:#5f5f5f"></div>
<div class="a" style="left:4px;top:474px;width:923px;height:1px;background:#555"></div>
<div class="a" style="left:929px;top:91px;width:1px;height:350px;background:#6a6a6a"></div>
<div class="a" style="left:930px;top:4px;width:1px;height:467px;background:#555"></div>
<svg style="left:0;top:0" width="931" height="475"><path d="M811 15.5 H821" stroke="#c8c8c8" stroke-width="1"/><rect x="856.5" y="10.5" width="9" height="9" fill="none" stroke="#000" stroke-width="1"/><path d="M902 10 L912 20 M912 10 L902 20" stroke="#000" stroke-width="1.1"/></svg>
</body></html>
